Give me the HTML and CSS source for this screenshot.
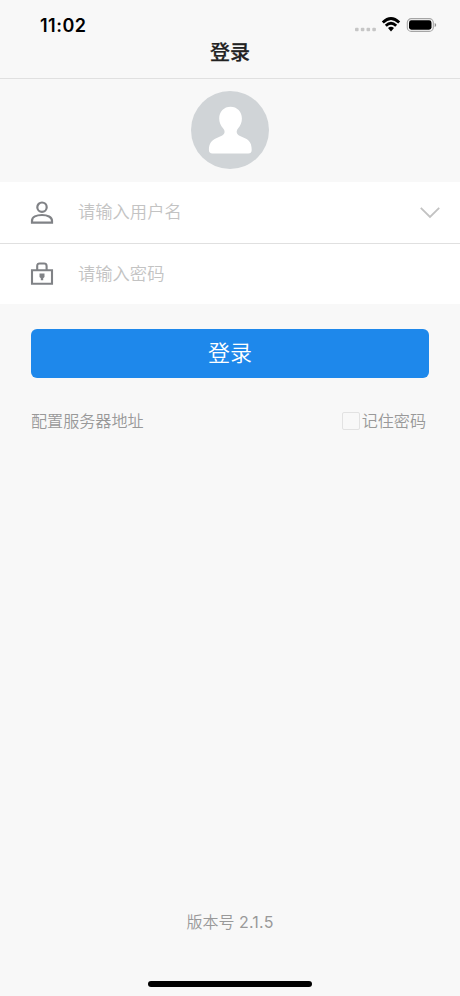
FILE: index.html
```html
<!DOCTYPE html>
<html lang="zh-CN">
<head>
<meta charset="utf-8">
<meta name="viewport" content="width=device-width, initial-scale=1">
<title>登录</title>
<link rel="stylesheet" href="styles.css">
</head>
<body>
<main class="screen">
  <header class="header">
    <div class="status">
      <span class="time">11:02</span>
      <svg class="indicators" width="84" height="20" viewBox="0 0 84 20" aria-hidden="true">
        <g fill="#c6c6c6">
          <rect x="1" y="12.8" width="3.6" height="3.4" rx="1"/>
          <rect x="6.8" y="12.8" width="3.6" height="3.4" rx="1"/>
          <rect x="12.5" y="12.8" width="3.6" height="3.4" rx="1"/>
          <rect x="18.3" y="12.8" width="3.6" height="3.4" rx="1"/>
        </g>
        <g fill="none" stroke="#000" stroke-width="2.8">
          <path d="M28.8 7.4Q37 -.6 45.2 7.4"/>
          <path d="M31.8 10.8Q37 5.8 42.2 10.8"/>
        </g>
        <path d="M34 13Q37 10.4 40 13L37 16.4Z"/>
        <rect x="53.3" y="3.6" width="26" height="12.8" rx="4" fill="none" stroke="#a5a5a5" stroke-width="1.1"/>
        <rect x="55" y="5.3" width="22.5" height="9.4" rx="2.4"/>
        <path d="M80.7 7.9Q82.2 8.4 82.2 10T80.7 12.1Z" fill="#8f8f8f"/>
      </svg>
    </div>
    <h1 class="title">登录</h1>
  </header>

  <div class="profile">
    <svg class="avatar" width="78" height="78" viewBox="0 0 78 78" aria-hidden="true">
      <circle cx="39" cy="39" r="39" fill="#d0d4d7"/>
      <path d="M39.5 15.8C46 15.8 50.9 20.6 50.9 27.5C50.9 31.2 49.6 34.4 47 37.5C44.8 40 45.4 43.2 48.5 44.8L54 47.2C58.2 49.2 60.7 52 60.7 58.8Q60.7 62.6 57.2 62.6H21.4Q17.9 62.6 17.9 58.8C17.9 52 21 49.2 25.2 47.2L30.7 44.8C34 43.2 34.4 40 32.2 37.5C29.6 34.4 28.2 31.2 28.2 27.5C28.2 20.6 33 15.8 39.5 15.8Z" fill="#fff"/>
    </svg>
  </div>

  <form class="form">
    <div class="fields">
      <label class="field">
        <svg width="24" height="26" viewBox="0 0 24 26" fill="none" stroke="#808286" stroke-width="2.2" aria-hidden="true">
          <circle cx="12" cy="7.2" r="4.7"/>
          <path d="M2 22.6V20.7C2 17 6.5 15 12 15S22 17 22 20.7V22.6Z"/>
        </svg>
        <input class="input" type="text" placeholder="请输入用户名">
        <svg class="chevron" width="20" height="12" viewBox="0 0 20 12" fill="none" stroke="#c2c2c2" stroke-width="1.8" aria-hidden="true">
          <path d="M.8 .8L10 10L19.2 .8"/>
        </svg>
      </label>
      <label class="field">
        <svg width="24" height="26" viewBox="0 0 24 26" fill="none" stroke="#808286" stroke-width="2.1" aria-hidden="true">
          <path d="M2 9.2H22V22.8H2Z"/>
          <path d="M7.2 9V5Q7.2 2.5 9.7 2.5H14.1Q16.6 2.5 16.6 5V9"/>
          <path d="M9.5 12.6H14.5V16L13.2 17.3V19.2H10.8V17.3L9.5 16Z" fill="#808286" stroke="none"/>
        </svg>
        <input class="input" type="password" placeholder="请输入密码">
      </label>
    </div>
    <button class="submit" type="button">登录</button>
    <div class="options">
      <span>配置服务器地址</span>
      <label class="remember"><input class="check" type="checkbox">记住密码</label>
    </div>
  </form>

  <footer class="footer">
    <span>版本号 <span class="number">2.1.5</span></span>
    <div class="home"></div>
  </footer>
</main>
</body>
</html>
```
FILE: styles.css
```css
* {
  box-sizing: border-box;
}

body {
  margin: 0;
  background: #f8f8f8;
  font-family: Inter, "Noto Sans CJK SC", sans-serif;
}

.screen {
  display: flex;
  flex-direction: column;
  height: 996px;
}

.header {
  height: 79px;
  padding-top: 15px;
  border-bottom: 1px solid #e0e0e0;
}

.status {
  display: flex;
  justify-content: space-between;
  height: 20px;
  padding: 0 22px 0 40px;
}

.time {
  font-size: 18px;
  font-weight: 600;
  letter-spacing: .5px;
  line-height: 21px;
}

.title {
  margin: 3px 0 0;
  color: #222;
  font-size: 20px;
  font-weight: 500;
  -webkit-text-stroke: .25px #222;
  line-height: 30px;
  text-align: center;
}

.profile {
  display: flex;
  justify-content: center;
  height: 103px;
  padding-top: 12px;
}

.fields {
  background: #fff;
}

.field {
  display: flex;
  align-items: center;
  height: 61px;
  padding: 0 20px 0 30px;
}

.field + .field {
  border-top: 1px solid #e0e0e0;
}

.input {
  flex: 1;
  min-width: 0;
  height: 30px;
  margin: 0 0 2px 24px;
  padding: 0;
  border: 0;
  outline: 0;
  background: transparent;
  color: #333;
  font-family: inherit;
  font-size: 17.3px;
  font-weight: 350;
}

.input::placeholder {
  color: #c3c3c3;
}

.submit {
  display: block;
  width: 398px;
  height: 49px;
  margin: 25px auto 0;
  padding: 0;
  border: 0;
  border-radius: 6px;
  background: #1e88eb;
  color: #fff;
  font-family: inherit;
  font-size: 22px;
  font-weight: 350;
  line-height: 49px;
}

.options {
  display: flex;
  justify-content: space-between;
  margin-top: 31px;
  padding: 0 34px 0 31px;
  color: #999;
  font-size: 16.1px;
  font-weight: 350;
  line-height: 24px;
}

.remember {
  display: flex;
  align-items: center;
  gap: 2px;
}

.check {
  width: 18px;
  height: 18px;
  margin: 0;
  border: 1px solid #e2e2e2;
  border-radius: 2px;
  appearance: none;
}

.footer {
  display: flex;
  flex-direction: column;
  align-items: center;
  justify-content: space-between;
  height: 77px;
  margin-top: auto;
  padding: 0 0 9px;
  color: #999;
  font-size: 16px;
  font-weight: 350;
  line-height: 24px;
}

.footer > span {
  margin-top: -9px;
}

.number {
  font-weight: 400;
  letter-spacing: .2px;
}

.home {
  width: 164px;
  height: 6px;
  border-radius: 3px;
  background: #000;
}
```
